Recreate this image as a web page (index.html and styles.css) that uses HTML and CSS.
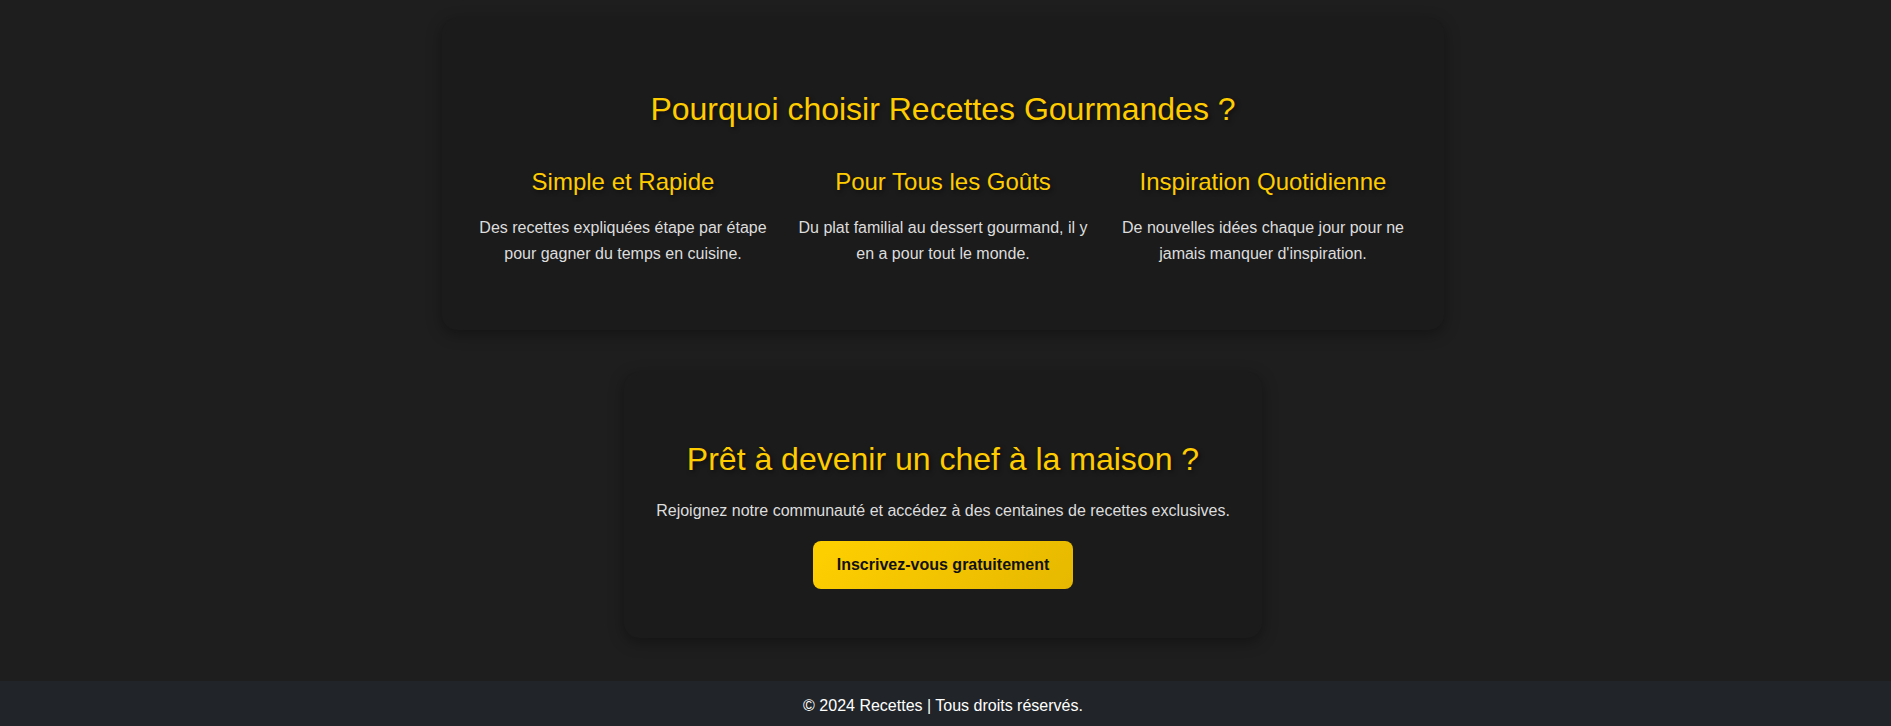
FILE: index.html
```html
<!DOCTYPE html>
<html lang="fr">
<head>
<meta charset="utf-8">
<title>Recettes Gourmandes</title>
<link rel="stylesheet" href="styles.css">
</head>
<body>
<main class="page">
  <section class="card why">
    <h2 class="title">Pourquoi choisir Recettes Gourmandes ?</h2>
    <div class="features">
      <div class="feature">
        <h3>Simple et Rapide</h3>
        <p>Des recettes expliquées étape par étape pour gagner du temps en cuisine.</p>
      </div>
      <div class="feature">
        <h3>Pour Tous les Goûts</h3>
        <p>Du plat familial au dessert gourmand, il y en a pour tout le monde.</p>
      </div>
      <div class="feature">
        <h3>Inspiration Quotidienne</h3>
        <p>De nouvelles idées chaque jour pour ne jamais manquer d'inspiration.</p>
      </div>
    </div>
  </section>
  <section class="card cta">
    <h2 class="title">Prêt à devenir un chef à la maison ?</h2>
    <p class="cta-text">Rejoignez notre communauté et accédez à des centaines de recettes exclusives.</p>
    <a class="btn" href="#">Inscrivez-vous gratuitement</a>
  </section>
</main>
<footer class="footer">
  <p>© 2024 Recettes | Tous droits réservés.</p>
</footer>
</body>
</html>
```
FILE: styles.css
```css
html, body {
  margin: 0;
  padding: 0;
}
body {
  background: #1e1e1e;
  font-family: "Liberation Sans", Arial, sans-serif;
  color: #dddddd;
}
.page {
  display: flex;
  flex-direction: column;
  align-items: center;
  padding: 18px 5px 43px 0;
  gap: 42px;
}
.card {
  background: #1b1b1b;
  border-radius: 15px;
  box-shadow: 0 4px 15px rgba(0, 0, 0, 0.35);
  text-align: center;
  box-sizing: border-box;
}
.title {
  margin: 0;
  font-size: 32px;
  font-weight: normal;
  line-height: 37px;
  color: #ffcc00;
  text-shadow: 2px 2px 4px rgba(0, 0, 0, 0.5);
}
.why {
  width: 1002px;
  padding: 73px 31px 64px;
}
.why .title {
  margin-bottom: 40px;
}
.features {
  display: grid;
  grid-template-columns: repeat(3, 1fr);
  gap: 20px;
}
.feature h3 {
  margin: 0 0 19px;
  font-size: 24px;
  font-weight: normal;
  line-height: 28px;
  color: #ffcc00;
  text-shadow: 2px 2px 4px rgba(0, 0, 0, 0.5);
}
.feature p {
  margin: 0;
  font-size: 16px;
  line-height: 25.6px;
  color: #dddddd;
}
.cta {
  width: 638px;
  padding: 69px 20px 49px;
}
.cta .title {
  margin-bottom: 20px;
}
.cta-text {
  margin: 0 0 17px;
  font-size: 16px;
  line-height: 25.6px;
  color: #dddddd;
}
.btn {
  display: inline-block;
  padding: 15px 24px;
  font-size: 16px;
  line-height: 18px;
  font-weight: bold;
  color: #111111;
  text-decoration: none;
  border-radius: 8px;
  background: linear-gradient(135deg, #ffd000, #e6b800);
}
.footer {
  background: #212529;
  color: #ffffff;
  text-align: center;
  padding: 15px 5px 15px 0;
}
.footer p {
  margin: 0;
  font-size: 16px;
  line-height: 20px;
}
```
